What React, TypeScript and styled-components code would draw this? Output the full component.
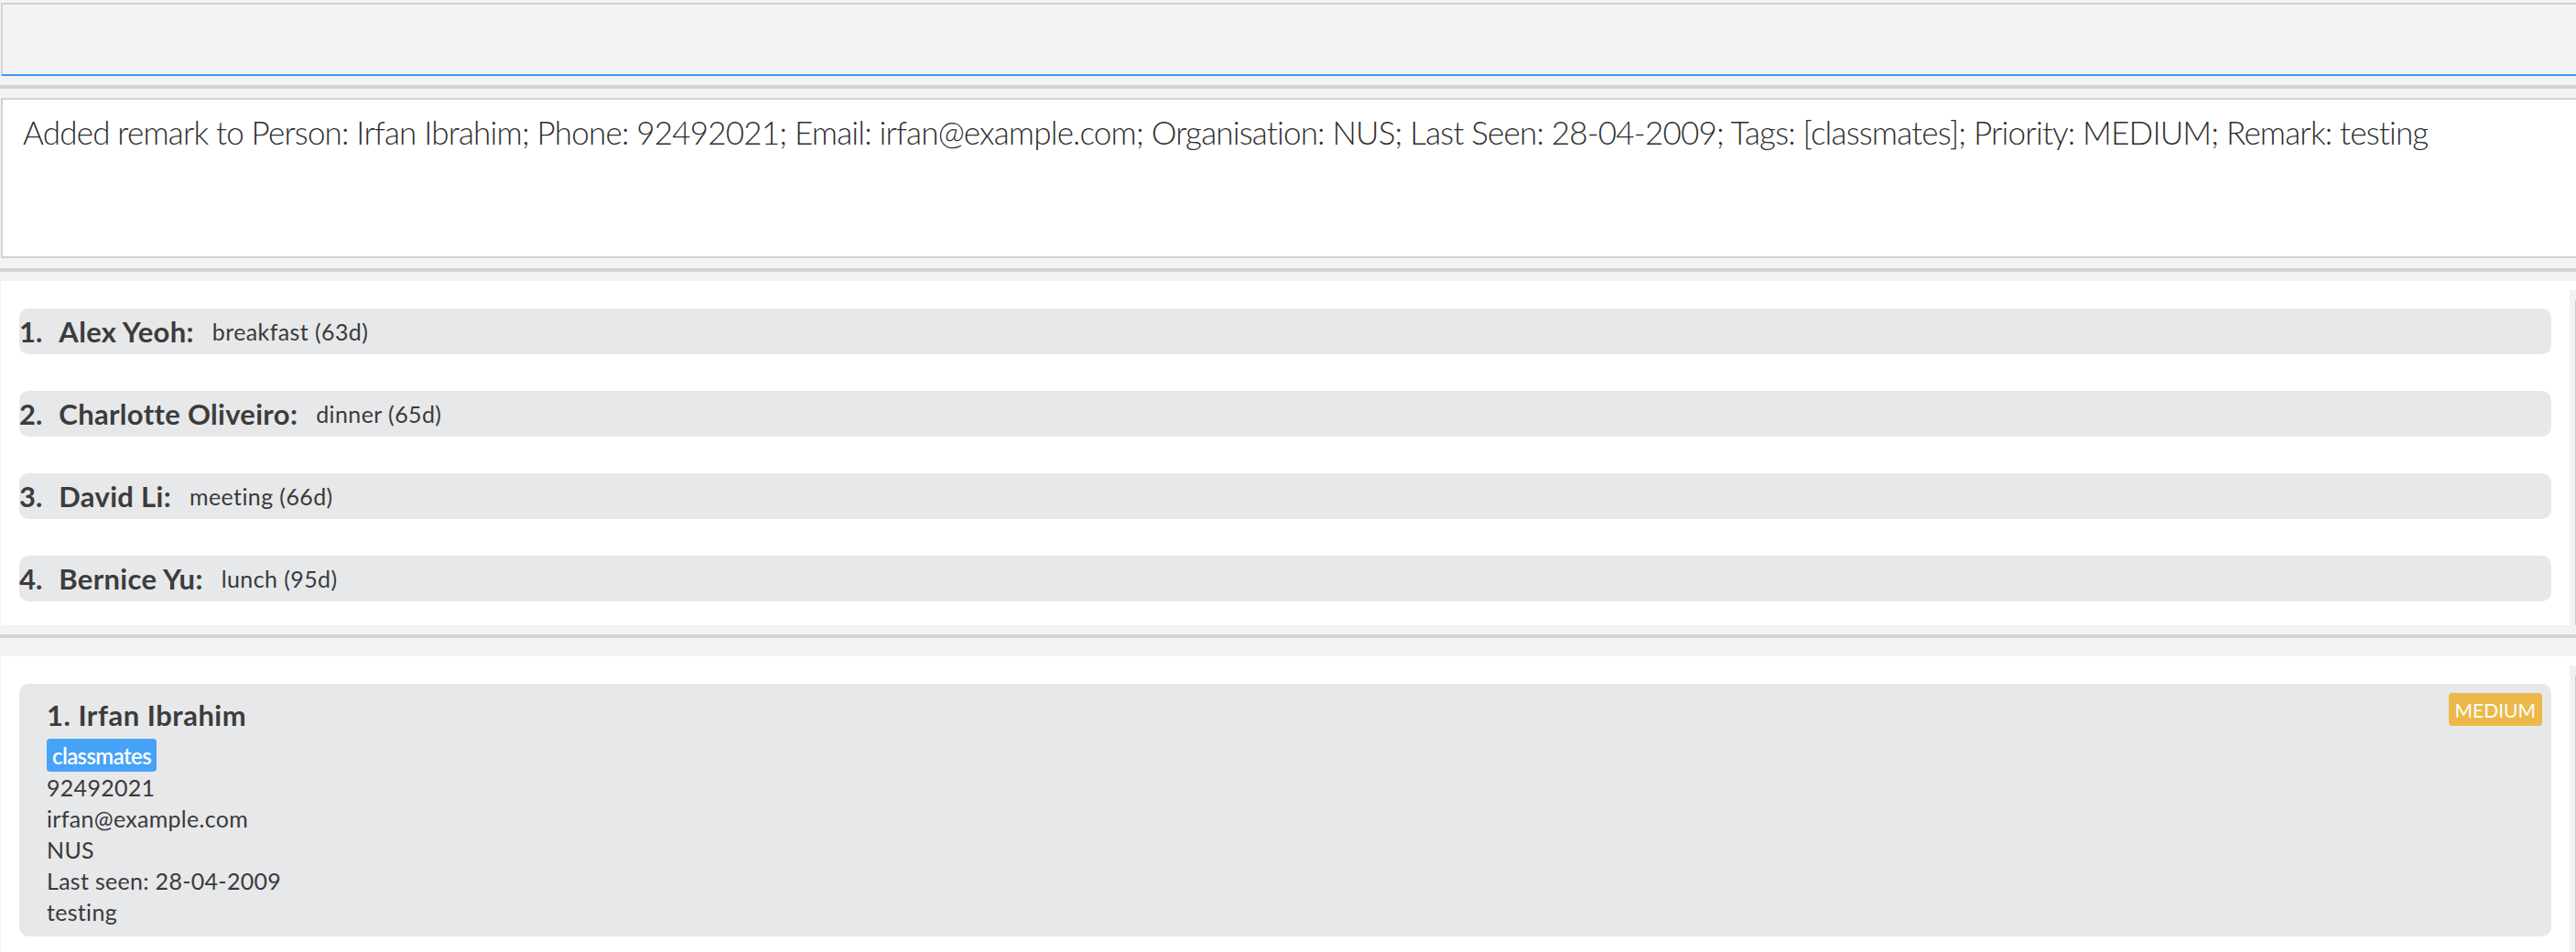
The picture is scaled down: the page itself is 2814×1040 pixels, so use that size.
import React from 'react';
import styled, { createGlobalStyle } from 'styled-components';

const GlobalStyle = createGlobalStyle`
  * { box-sizing: border-box; }
  html, body { margin: 0; padding: 0; background: #f3f3f3; }
  body {
    width: 2814px;
    height: 1040px;
    overflow: hidden;
    font-family: Lato, "Open Sans", sans-serif;
    color: #3a3a3a;
  }
`;

const Window = styled.div`
  display: flex;
  flex-direction: column;
  width: 2814px;
  height: 1040px;
  background: #f3f3f3;
  overflow: hidden;
`;

const CommandBox = styled.input`
  display: block;
  margin: 3px 0 0 1px;
  width: calc(100% - 1px);
  height: 80px;
  padding: 0 20px;
  background: #f3f3f3;
  border: none;
  border-top: 2px solid #d3d3d3;
  border-left: 2px solid #d3d3d3;
  border-bottom: 2px solid #3b99f2;
  font-family: Lato, sans-serif;
  font-size: 34px;
  color: #333;
  outline: none;
`;

const Divider = styled.div<{ $above: number; $below: number }>`
  flex: none;
  height: 4px;
  margin-top: ${(p) => p.$above}px;
  margin-bottom: ${(p) => p.$below}px;
  background: #d3d3d3;
`;

const ResultBox = styled.div`
  flex: none;
  margin-left: 1px;
  height: 175px;
  padding: 14px 20px 0 22px;
  background: #ffffff;
  border: 2px solid #d3d3d3;
  border-right: none;
  font-family: "Lato Light", Lato, sans-serif;
  font-weight: 300;
  font-size: 35px;
  line-height: 42px;
  color: #2e2e2e;
  white-space: nowrap;
  letter-spacing: -0.8px;
`;

const Panel = styled.div<{ $height: number }>`
  flex: none;
  display: flex;
  height: ${(p) => p.$height}px;
  margin-left: 1px;
  background: #ffffff;
`;

const PanelBody = styled.div`
  flex: 1;
  display: flex;
  flex-direction: column;
  gap: 40px;
  padding: 30px 20px 0 20px;
`;

const ScrollTrack = styled.div`
  position: relative;
  flex: none;
  width: 7px;
  margin-top: 10px;
  background: #f1f1f1;
  &::after {
    content: '';
    position: absolute;
    top: 11px;
    bottom: 0;
    left: 6px;
    width: 1px;
    background: #c9c9c9;
  }
`;

const ReminderCard = styled.div`
  display: flex;
  align-items: center;
  gap: 18px;
  height: 50px;
  padding-left: 0;
  border-radius: 10px;
  background: #e7e8ea;
`;

const ReminderIndex = styled.span`
  font-size: 31px;
  font-weight: 700;
  color: #3c3c3c;
`;

const ReminderName = styled.span`
  font-size: 31px;
  font-weight: 700;
  color: #3c3c3c;
  letter-spacing: 0.3px;
`;

const ReminderNote = styled.span`
  margin-left: 2px;
  font-size: 25px;
  font-weight: 400;
  color: #3a3a3a;
  letter-spacing: 0.4px;
`;

const PersonCard = styled.div`
  display: flex;
  flex-direction: column;
  height: 276px;
  padding: 10px 10px 10px 30px;
  border-radius: 10px;
  background: #e7e8ea;
`;

const CardHeader = styled.div`
  display: flex;
  align-items: flex-start;
  justify-content: space-between;
  height: 48px;
  margin-bottom: 2px;
`;

const PersonName = styled.span`
  font-size: 31px;
  line-height: 48px;
  font-weight: 700;
  color: #3c3c3c;
  letter-spacing: 0.5px;
`;

const PriorityBadge = styled.span`
  display: inline-flex;
  align-items: center;
  height: 36px;
  padding: 0 7px;
  border-radius: 4px;
  background: #ecb849;
  color: #ffffff;
  font-size: 21px;
  font-weight: 400;
  letter-spacing: 0;
`;

const TagRow = styled.div`
  display: flex;
  gap: 8px;
  height: 36px;
`;

const Tag = styled.span`
  display: inline-flex;
  align-items: center;
  height: 36px;
  padding: 0 6px;
  border-radius: 4px;
  background: #46a3f7;
  color: #ffffff;
  font-size: 24px;
  font-weight: 600;
  letter-spacing: -0.6px;
`;

const InfoLine = styled.div`
  font-size: 25px;
  line-height: 34px;
  color: #3a3a3a;
  letter-spacing: 0.3px;
  white-space: nowrap;
`;

const reminders = [
  { name: 'Alex Yeoh', note: 'breakfast (63d)' },
  { name: 'Charlotte Oliveiro', note: 'dinner (65d)' },
  { name: 'David Li', note: 'meeting (66d)' },
  { name: 'Bernice Yu', note: 'lunch (95d)' },
];

const person = {
  name: 'Irfan Ibrahim',
  tags: ['classmates'],
  phone: '92492021',
  email: 'irfan@example.com',
  organisation: 'NUS',
  lastSeen: 'Last seen: 28-04-2009',
  remark: 'testing',
  priority: 'MEDIUM',
};

export default function App() {
  return (
    <>
      <GlobalStyle />
      <Window>
        <CommandBox aria-label="command" defaultValue="" />
        <Divider $above={10} $below={10} />
        <ResultBox>
          Added remark to Person: Irfan Ibrahim; Phone: 92492021; Email: irfan@example.com; Organisation: NUS; Last
          Seen: 28-04-2009; Tags: [classmates]; Priority: MEDIUM; Remark: testing
        </ResultBox>
        <Divider $above={11} $below={10} />
        <Panel $height={376}>
          <PanelBody>
            {reminders.map((r, i) => (
              <ReminderCard key={r.name}>
                <ReminderIndex>{i + 1}.</ReminderIndex>
                <ReminderName>{r.name}:</ReminderName>
                <ReminderNote>{r.note}</ReminderNote>
              </ReminderCard>
            ))}
          </PanelBody>
          <ScrollTrack />
        </Panel>
        <Divider $above={10} $below={20} />
        <Panel $height={323}>
          <PanelBody>
            <PersonCard>
              <CardHeader>
                <PersonName>1. {person.name}</PersonName>
                <PriorityBadge>{person.priority}</PriorityBadge>
              </CardHeader>
              <TagRow>
                {person.tags.map((t) => (
                  <Tag key={t}>{t}</Tag>
                ))}
              </TagRow>
              <InfoLine>{person.phone}</InfoLine>
              <InfoLine>{person.email}</InfoLine>
              <InfoLine>{person.organisation}</InfoLine>
              <InfoLine>{person.lastSeen}</InfoLine>
              <InfoLine>{person.remark}</InfoLine>
            </PersonCard>
          </PanelBody>
          <ScrollTrack />
        </Panel>
      </Window>
    </>
  );
}
